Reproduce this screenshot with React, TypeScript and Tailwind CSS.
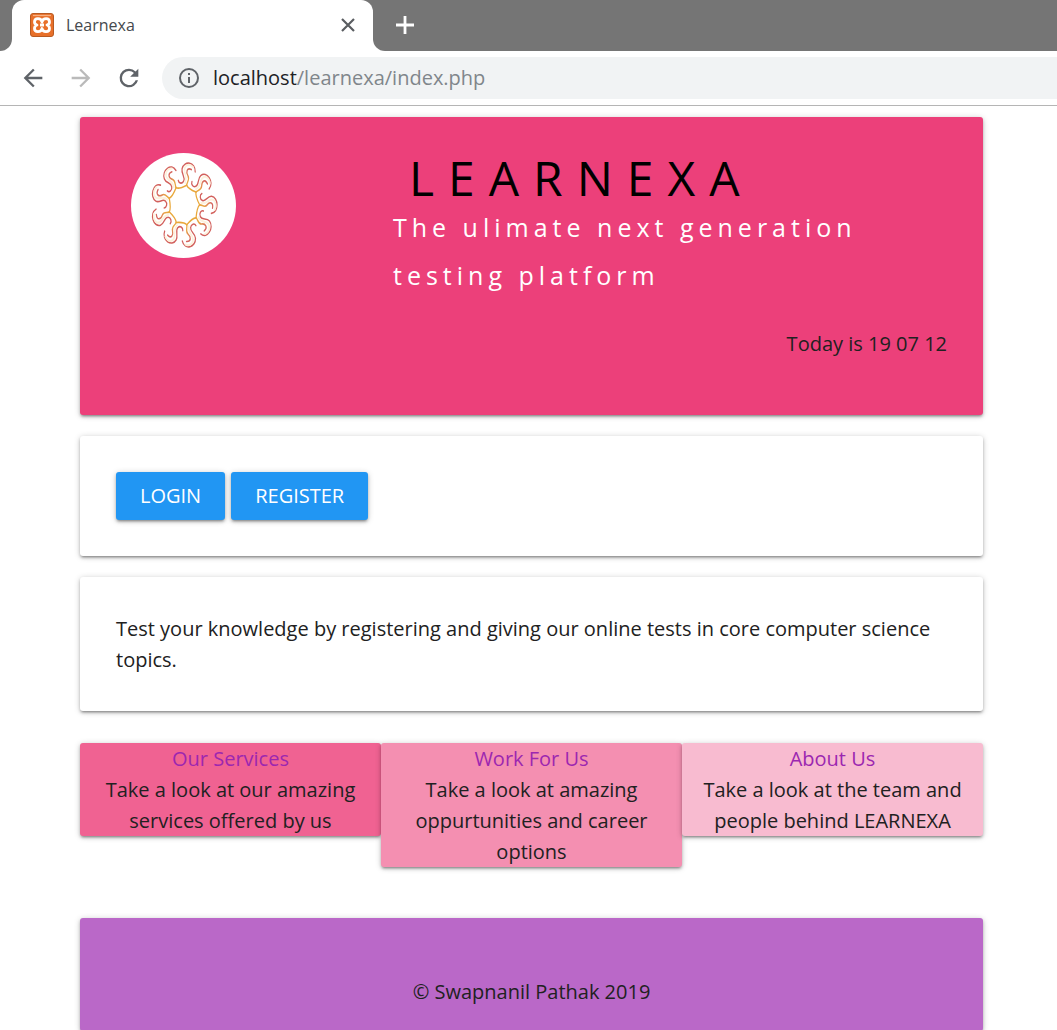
import React from 'react';

const ARMS = [0, 40, 80, 120, 160, 200, 240, 280, 320];

function SunLogo() {
  return (
    <svg viewBox="0 0 105 105" className="block size-[105px]" role="img" aria-label="Learnexa logo">
      <defs>
        <radialGradient id="ray" gradientUnits="userSpaceOnUse" cx="0" cy="0" r="42">
          <stop offset="0.42" stopColor="#e9a83a" />
          <stop offset="0.62" stopColor="#e8a446" />
          <stop offset="0.8" stopColor="#d9705c" />
          <stop offset="1" stopColor="#cc5560" />
        </radialGradient>
      </defs>
      <circle cx="52.5" cy="52.5" r="52.5" fill="#ffffff" />
      <g transform="translate(53 52) scale(0.78 1) rotate(4)" fill="none" stroke="url(#ray)" strokeWidth="1.600" strokeLinecap="round">
        {ARMS.map((a) => (
          <g key={a} transform={`rotate(${a})`}>
            <path d="M12 -34 C12 -44 -3 -45 -5 -36 C-6 -31 0 -28 -2 -24 C-3.500 -20.500 -8 -21 -9 -24" stroke="#d2605c" />
            <path d="M7 -36 C1 -38 0 -33 3 -29.500 C6 -26 2 -23 2 -20" />
            <path d="M2 -20 C4 -16.500 10 -15 14.400 -14" />
            <path
              d="M9 -38.500 C3 -43 -3 -39 -1.500 -33.500 C0 -29 2 -27 0 -22"
              stroke="#fdf1dc"
              strokeWidth="2"
            />
          </g>
        ))}
      </g>
    </svg>
  );
}

function Favicon() {
  return (
    <svg viewBox="0 0 24 24" className="size-6 shrink-0" aria-hidden="true">
      <rect x="0.500" y="0.500" width="23" height="23" rx="2.500" fill="#e8702a" stroke="#b85a22" />
      <path d="M3 2.500h18" stroke="#f6b184" strokeWidth="1.200" />
      <path
        d="M12 9C11 4.500 4.500 4.500 4.500 9c0 1.500 1 2.500 2.500 3-1.500.5-2.500 1.500-2.500 3.500 0 4 6.500 4.500 7.500 0 1 4.500 7.500 4 7.500 0 0-2-1-3-2.500-3.500 1.500-.5 2.500-1.500 2.500-3C19.500 4.500 13 4.500 12 9ZM10 12h4"
        fill="none"
        stroke="#fff"
        strokeWidth="2.800"
        strokeLinejoin="round"
      />
    </svg>
  );
}

function BrowserChrome() {
  return (
    <header className="border-b border-[#b5b5b5] bg-white">
      <div className="flex h-[51px] bg-[#757575]">
        <div className="w-3 bg-white">
          <div className="h-full rounded-br-xl bg-[#757575]" />
        </div>
        <div className="w-[361px] bg-[#757575]">
          <div className="flex h-full items-center rounded-t-xl bg-white pr-4 pb-px pl-[18px]">
            <Favicon />
            <span className="ml-3 flex-1 text-base text-[#45494d]">Learnexa</span>
            <button aria-label="Close tab" className="p-0.5">
              <svg viewBox="0 0 14 14" className="size-3.5" stroke="#5a5d61" strokeWidth="2.200">
                <path d="M1 1l12 12M13 1L1 13" />
              </svg>
            </button>
          </div>
        </div>
        <div className="flex-1 bg-white">
          <div className="flex h-full items-center rounded-bl-xl bg-[#757575] pb-px pl-[22px]">
            <button aria-label="New tab">
              <svg viewBox="0 0 20 20" className="size-5" stroke="#fff" strokeWidth="2.800">
                <path d="M10 1v18M1 10h18" />
              </svg>
            </button>
          </div>
        </div>
      </div>
      <div className="flex h-[54px] items-center pl-[19px]">
        <button aria-label="Back">
          <svg viewBox="0 0 24 24" className="size-7" fill="#5f6368">
            <path d="M20 11H7.830l5.590-5.590L12 4l-8 8 8 8 1.410-1.410L7.830 13H20v-2z" />
          </svg>
        </button>
        <button aria-label="Forward" className="ml-5">
          <svg viewBox="0 0 24 24" className="size-7" fill="#bababa">
            <path d="M12 4l-1.410 1.410L16.170 11H4v2h12.170l-5.580 5.590L12 20l8-8z" />
          </svg>
        </button>
        <button aria-label="Reload" className="ml-5">
          <svg viewBox="0 0 24 24" className="size-7" fill="#5f6368">
            <path d="M17.650 6.350A7.958 7.958 0 0 0 12 4a8 8 0 1 0 7.730 10h-2.080A6 6 0 1 1 12 6c1.660 0 3.140.690 4.220 1.780L13 11h7V4l-2.350 2.350z" />
          </svg>
        </button>
        <div className="ml-[19px] flex h-[42px] flex-1 items-center rounded-l-full bg-[#f1f3f4] pl-[15px]">
          <svg viewBox="0 0 24 24" className="size-6 shrink-0" fill="#5f6368" aria-hidden="true">
            <path d="M11 7h2v2h-2zm0 4h2v6h-2zm1-9a10 10 0 1 0 0 20 10 10 0 0 0 0-20zm0 18a8 8 0 1 1 0-16 8 8 0 0 1 0 16z" />
          </svg>
          <p className="ml-3 text-xl text-[#80868b]">
            <span className="text-[#202124]">localhost</span>/learnexa/index.php
          </p>
        </div>
      </div>
    </header>
  );
}

const CARD =
  'rounded-[3px] shadow-[0_2px_3px_0_rgba(0,0,0,0.22),0_3px_2px_-2px_rgba(0,0,0,0.2),0_1px_6px_0_rgba(0,0,0,0.2)]';

const TILES = [
  { title: 'Our Services', text: 'Take a look at our amazing services offered by us', color: 'bg-[#f06292]' },
  { title: 'Work For Us', text: 'Take a look at amazing oppurtunities and career options', color: 'bg-[#f48fb1]' },
  { title: 'About Us', text: 'Take a look at the team and people behind LEARNEXA', color: 'bg-[#f8bbd0]' },
];

export default function App() {
  return (
    <div className="min-h-screen bg-white font-['Open_Sans','Noto_Sans',sans-serif] text-[#212121]">
      <BrowserChrome />
      <main className="pt-[11px] pr-[74px] pl-20 text-xl leading-[31px]">
        <section className={`${CARD} bg-[#ec407a] p-9`}>
          <div className="flex">
            <div className="w-1/3 shrink-0 pl-[15px]">
              <SunLogo />
            </div>
            <div>
              <h1 className="pl-4 text-5xl leading-[50px] tracking-[14px] text-black">LEARNEXA</h1>
              <p className="text-[25px] leading-[48px] tracking-[5px] text-white">
                The ulimate next generation testing platform
              </p>
            </div>
          </div>
          <p className="pt-[29px] pb-5 text-right">Today is 19 07 12</p>
        </section>

        <section className={`${CARD} mt-[21px] flex gap-1.5 bg-white p-9`}>
          <button className={`${CARD} h-12 bg-[#2196f3] px-6 text-xl text-white`}>LOGIN</button>
          <button className={`${CARD} h-12 bg-[#2196f3] px-6 text-xl text-white`}>REGISTER</button>
        </section>

        <section className={`${CARD} mt-[21px] bg-white p-9`}>
          <p>Test your knowledge by registering and giving our online tests in core computer science topics.</p>
        </section>

        <section className="mt-8 grid grid-cols-3 items-start text-center">
          {TILES.map((t) => (
            <article key={t.title} className={`${CARD} ${t.color} px-4`}>
              <a href="#" className="text-[#9c27b0]">{t.title}</a>
              <p>{t.text}</p>
            </article>
          ))}
        </section>
      </main>
      <div className="pt-[51px] pr-[74px] pl-20">
        <footer className={`${CARD} bg-[#ba68c8] pt-[58px] pb-6 text-center text-xl leading-[31px]`}>
          © Swapnanil Pathak 2019
        </footer>
      </div>
    </div>
  );
}
